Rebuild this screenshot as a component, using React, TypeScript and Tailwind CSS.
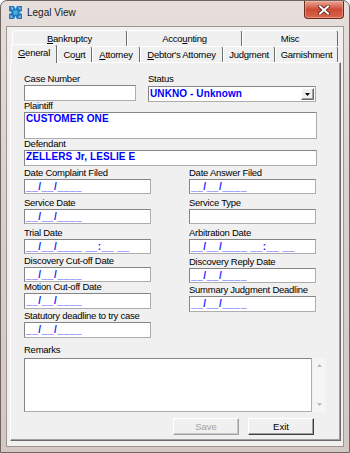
import React from "react";

const box =
  "bg-white border border-t-[#858585] border-l-[#858585] border-r-[#adadad] border-b-[#adadad] text-[10px] leading-[12px]";
const lblBase =
  "flex items-end text-[9.5px] leading-[12px] tracking-[-0.25px] text-black whitespace-nowrap";
const val =
  "block text-[10px] font-bold text-[#0000ff] leading-[12px] whitespace-pre";
const maskCls =
  "block text-[10px] font-bold text-[#1a1aff] leading-[12px] whitespace-pre tracking-[0.6px]";

function Logo() {
  return (
    <svg width="15" height="15" viewBox="0 0 15 15" className="ml-[7px] mt-[4px]">
      <path
        d="M1 1 L6 1 L7.5 4 L9 1 L14 1 L14 6 L11 7.5 L14 9 L14 14 L9 14 L7.5 11 L6 14 L1 14 L1 9 L4 7.5 L1 6 Z"
        fill="#2a78c0"
      />
      <path d="M2.5 2.5 L5 2.5 L5 5 Z M12.5 2.5 L12.5 5 L10 2.5 Z M2.5 12.5 L2.5 10 L5 12.5 Z M12.5 12.5 L10 12.5 L12.5 10 Z" fill="#9fd8f0" />
      <rect x="5.5" y="5.5" width="4" height="4" fill="#36bcd6" />
    </svg>
  );
}

function CloseBtn() {
  return (
    <div className="mr-[5px] w-[40px] h-[18px] rounded-b-[4px] border border-t-0 border-[#6b2a20] bg-gradient-to-b from-[#e9a796] via-[#cc4a34] to-[#d9664c] flex items-center justify-center shadow-[inset_0_0_0_1px_rgba(255,200,190,0.45)]">
      <svg width="12" height="10" viewBox="0 0 12 10">
        <path d="M2 1.5 L10 8.5 M10 1.5 L2 8.5" stroke="#5a1e16" strokeWidth="3.6" strokeLinecap="square" />
        <path d="M2 1.5 L10 8.5 M10 1.5 L2 8.5" stroke="#ffffff" strokeWidth="2" strokeLinecap="square" />
      </svg>
    </div>
  );
}

function Tab({ w, children, sel }: { w: string; children: React.ReactNode; sel?: boolean }) {
  return (
    <div
      className={
        w +
        (sel ? " h-[19px] relative top-[1px] z-10 bg-[#f0f0f0]" : " h-[16px]") +
        " shrink-0 flex items-center justify-center border-t border-l border-r border-t-white border-l-white border-r-[#6e6e6e] rounded-t-[3px] text-[9.5px] tracking-[-0.25px] leading-[12px] text-black whitespace-nowrap"
      }
    >
      {children}
    </div>
  );
}

function Field({
  label,
  lh,
  ih,
  children,
}: {
  label: string;
  lh: string;
  ih: string;
  children?: React.ReactNode;
}) {
  return (
    <>
      <div className={lblBase + " " + lh}>{label}</div>
      <div className={box + " " + ih + " w-full pl-[1px] pt-[1px] overflow-hidden"}>{children}</div>
    </>
  );
}

function Mask({ time }: { time?: boolean }) {
  return <span className={maskCls}>{time ? "__/__/____ __:__ __" : "__/__/____"}</span>;
}

export default function App() {
  return (
    <div className="w-[350px] h-[453px] font-['Liberation_Sans',Arial,sans-serif] text-black bg-white">
      <div className="w-full h-full flex flex-col rounded-t-[7px] border border-[#6e6460] bg-gradient-to-b from-[#e6dfdc] via-[#d8cecb] to-[#d3c8c4] overflow-hidden">
        {/* title bar */}
        <div className="h-[26px] flex items-start shrink-0">
          <Logo />
          <span className="ml-[4px] mt-[6px] text-[10px] leading-[12px] text-[#1a1a1a]">Legal View</span>
          <div className="flex-1" />
          <CloseBtn />
        </div>
        <div className="flex-1 flex px-[6px] pb-[6px]">
          <div className="flex-1 bg-[#f0f0f0] shadow-[0_0_0_1px_#a0948f] flex flex-col">
            {/* tab row 1 */}
            <div className="h-[19px] pt-[3px] pl-[5px] flex shrink-0">
              <Tab w="w-[115px]">
                <span>
                  <u>B</u>ankruptcy
                </span>
              </Tab>
              <Tab w="w-[115px]">
                <span>
                  Acco<u>u</u>nting
                </span>
              </Tab>
              <Tab w="w-[96px]">
                <span>Misc</span>
              </Tab>
            </div>
            {/* tab row 2 */}
            <div className="h-[16px] pl-[4px] flex items-end shrink-0">
              <Tab w="w-[46px]" sel>
                <span className="-mt-[2px]">
                  <u>G</u>eneral
                </span>
              </Tab>
              <Tab w="w-[35px]">
                <span>
                  Co<u>u</u>rt
                </span>
              </Tab>
              <Tab w="w-[48px]">
                <span>
                  <u>A</u>ttorney
                </span>
              </Tab>
              <Tab w="w-[83px]">
                <span>
                  <u>D</u>ebtor's Attorney
                </span>
              </Tab>
              <Tab w="w-[52px]">
                <span>Judgment</span>
              </Tab>
              <Tab w="w-[63px]">
                <span>Garnishment</span>
              </Tab>
            </div>
            {/* panel */}
            <div className="ml-[3px] mr-[2px] mb-[5px] flex-1 border border-t-white border-l-white border-r-[#696969] border-b-[#696969] shadow-[inset_-1px_-1px_0_#a0a0a0] pl-[13px] pt-[10px] flex flex-col">
              {/* case / status */}
              <div className="flex">
                <div className="w-[112px] flex flex-col">
                  <div className={lblBase + " h-[12px]"}>Case Number</div>
                  <div className={box + " h-[16px]"} />
                </div>
                <div className="ml-[12px] w-[168px] flex flex-col">
                  <div className={lblBase + " h-[12px]"}>Status</div>
                  <div className={box + " mt-[1px] h-[16px] flex items-start"}>
                    <span className={val + " pl-[1px] pt-[1px] tracking-[0.1px]"}>UNKNO - Unknown</span>
                    <div className="flex-1" />
                    <div className="mt-[1px] mr-[1px] w-[13px] h-[12px] bg-[#f0f0f0] border border-t-white border-l-white border-r-[#696969] border-b-[#696969] shadow-[inset_-1px_-1px_0_#a0a0a0] flex items-center justify-center">
                      <svg width="5" height="3" viewBox="0 0 5 3">
                        <path d="M0 0 L5 0 L2.5 3 Z" fill="#000" />
                      </svg>
                    </div>
                  </div>
                </div>
              </div>
              {/* plaintiff */}
              <div className={lblBase + " h-[10px]"}>Plaintiff</div>
              <div className={box + " w-[293px] h-[27px] pl-[1px]"}>
                <span className={val + " tracking-[0.1px]"}>CUSTOMER ONE</span>
              </div>
              <div className={lblBase + " h-[11px]"}>Defendant</div>
              <div className={box + " w-[293px] h-[16px] pl-[1px]"}>
                <span className={val + " tracking-[0.1px]"}>ZELLERS Jr, LESLIE E</span>
              </div>
              {/* two columns */}
              <div className="flex gap-[38px]">
                <div className="w-[127px] flex flex-col">
                  <Field label="Date Complaint Filed" lh="h-[13px]" ih="h-[15px]">
                    <Mask />
                  </Field>
                  <Field label="Service Date" lh="h-[15px]" ih="h-[15px]">
                    <Mask />
                  </Field>
                  <Field label="Trial Date" lh="h-[15px]" ih="h-[15px]">
                    <Mask time />
                  </Field>
                  <Field label="Discovery Cut-off Date" lh="h-[13px]" ih="h-[15px]">
                    <Mask />
                  </Field>
                  <Field label="Motion Cut-off Date" lh="h-[11px]" ih="h-[16px]">
                    <Mask />
                  </Field>
                  <Field label="Statutory deadline to try case" lh="h-[13px]" ih="h-[16px]">
                    <Mask />
                  </Field>
                </div>
                <div className="w-[127px] flex flex-col">
                  <Field label="Date Answer Filed" lh="h-[13px]" ih="h-[15px]">
                    <Mask />
                  </Field>
                  <Field label="Service Type" lh="h-[15px]" ih="h-[15px]" />
                  <Field label="Arbitration Date" lh="h-[15px]" ih="h-[15px]">
                    <Mask time />
                  </Field>
                  <Field label="Discovery Reply Date" lh="h-[14px]" ih="h-[15px]">
                    <Mask />
                  </Field>
                  <Field label="Summary Judgment Deadline" lh="h-[13px]" ih="h-[16px]">
                    <Mask />
                  </Field>
                </div>
              </div>
              {/* remarks */}
              <div className={lblBase + " h-[20px] pb-[2px]"}>Remarks</div>
              <div className="flex">
                <div className={box + " w-[288px] h-[54px]"} />
                <div className="ml-[1px] w-[13px] h-[54px] bg-[#f5f5f5] flex flex-col items-center justify-between py-[6px]">
                  <svg width="5" height="3" viewBox="0 0 5 3">
                    <path d="M0 3 L5 3 L2.5 0 Z" fill="#b8b8b8" />
                  </svg>
                  <svg width="5" height="3" viewBox="0 0 5 3">
                    <path d="M0 0 L5 0 L2.5 3 Z" fill="#b8b8b8" />
                  </svg>
                </div>
              </div>
              {/* buttons */}
              <div className="mt-[6px] ml-[149px] flex gap-[9px]">
                <div className="w-[66px] h-[17px] bg-[#f0f0f0] border border-t-white border-l-white border-r-[#a0a0a0] border-b-[#a0a0a0] shadow-[inset_-1px_-1px_0_#c8c8c8] flex items-center justify-center text-[9.5px] leading-[12px] text-[#a0a0a0]">
                  Save
                </div>
                <div className="w-[66px] h-[17px] bg-[#f0f0f0] border border-t-white border-l-white border-r-[#404040] border-b-[#404040] shadow-[inset_-1px_-1px_0_#a0a0a0] flex items-center justify-center text-[9.5px] leading-[12px] text-black">
                  Exit
                </div>
              </div>
            </div>
          </div>
        </div>
      </div>
    </div>
  );
}
